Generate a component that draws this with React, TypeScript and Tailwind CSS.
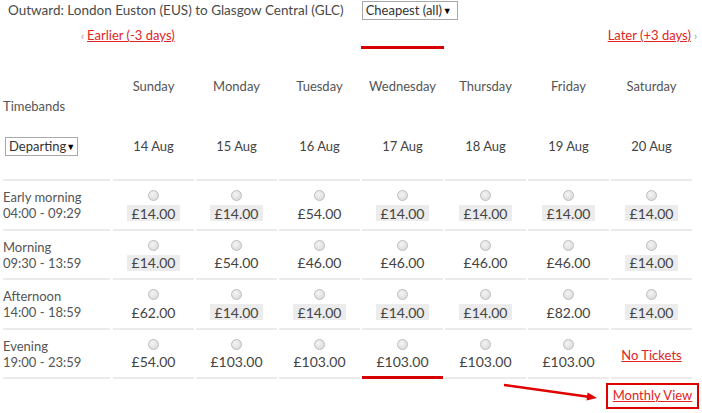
import React from "react";

type Cell = { price?: string; cheap?: boolean; none?: boolean };

const days = [
  { name: "Sunday", date: "14 Aug" },
  { name: "Monday", date: "15 Aug" },
  { name: "Tuesday", date: "16 Aug" },
  { name: "Wednesday", date: "17 Aug" },
  { name: "Thursday", date: "18 Aug" },
  { name: "Friday", date: "19 Aug" },
  { name: "Saturday", date: "20 Aug" },
];

const rows: { label: string; time: string; cells: Cell[] }[] = [
  {
    label: "Early morning",
    time: "04:00 - 09:29",
    cells: [
      { price: "£14.00", cheap: true },
      { price: "£14.00", cheap: true },
      { price: "£54.00" },
      { price: "£14.00", cheap: true },
      { price: "£14.00", cheap: true },
      { price: "£14.00", cheap: true },
      { price: "£14.00", cheap: true },
    ],
  },
  {
    label: "Morning",
    time: "09:30 - 13:59",
    cells: [
      { price: "£14.00", cheap: true },
      { price: "£54.00" },
      { price: "£46.00" },
      { price: "£46.00" },
      { price: "£46.00" },
      { price: "£46.00" },
      { price: "£14.00", cheap: true },
    ],
  },
  {
    label: "Afternoon",
    time: "14:00 - 18:59",
    cells: [
      { price: "£62.00" },
      { price: "£14.00", cheap: true },
      { price: "£14.00", cheap: true },
      { price: "£14.00", cheap: true },
      { price: "£14.00", cheap: true },
      { price: "£82.00" },
      { price: "£14.00", cheap: true },
    ],
  },
  {
    label: "Evening",
    time: "19:00 - 23:59",
    cells: [
      { price: "£54.00" },
      { price: "£103.00" },
      { price: "£103.00" },
      { price: "£103.00" },
      { price: "£103.00" },
      { price: "£103.00" },
      { none: true },
    ],
  },
];

const Radio = () => (
  <span className="block h-[11px] w-[11px] rounded-full border border-[#bdbdbd] bg-[radial-gradient(circle_at_40%_35%,#f4f4f4,#d6d6d6)]" />
);

const Select = ({ label, className }: { label: string; className: string }) => (
  <div
    className={`flex items-center justify-between border border-[#a9a9a9] bg-white pl-[3px] pr-[5px] text-[13px] leading-none text-[#333] ${className}`}
  >
    <span>{label}</span>
    <span className="text-[9px] text-black">▼</span>
  </div>
);

export default function App() {
  return (
    <div className="relative h-[413px] w-[702px] overflow-hidden bg-white font-['Lato',sans-serif] text-[13px] text-[#555]">
      {/* title row */}
      <div className="flex h-[20px] items-center pl-[8px] pt-[1px]">
        <span className="text-[13.5px] text-[#4a4a4a]">
          Outward: London Euston (EUS) to Glasgow Central (GLC)
        </span>
        <Select label="Cheapest (all)" className="ml-[18px] h-[19px] w-[96px]" />
      </div>

      {/* earlier / later */}
      <div className="flex h-[26px] items-center justify-between pl-[81px] pr-[5px] pt-[6px]">
        <span className="flex items-center gap-[3px]">
          <span className="text-[11px] text-[#999]">‹</span>
          <a className="text-[#e02424] underline">Earlier (-3 days)</a>
        </span>
        <span className="flex items-center gap-[3px]">
          <a className="text-[#e02424] underline">Later (+3 days)</a>
          <span className="text-[11px] text-[#999]">›</span>
        </span>
      </div>

      <div className="grid grid-cols-[112px_repeat(7,83px)]">
        {/* selected day marker */}
        <div className="col-start-5 h-[3px] bg-[#d60000]" />
        <div className="col-span-8 h-0" />

        {/* header */}
        <div className="ml-[3px] mr-[2px] h-[132px] border-b-2 border-[#ebebeb]">
          <div className="pt-[49px] leading-[16px]">Timebands</div>
          <Select label="Departing" className="ml-[2px] mt-[23px] h-[19px] w-[73px]" />
        </div>
        {days.map((d) => (
          <div
            key={d.name}
            className="mx-[1px] flex h-[132px] flex-col items-center border-b-2 border-[#ebebeb] pt-[29px] leading-[16px]"
          >
            <span>{d.name}</span>
            <span className="mt-[44px] text-[#444]">{d.date}</span>
          </div>
        ))}

        {/* body */}
        {rows.map((r, ri) => (
          <React.Fragment key={r.label}>
            <div className="ml-[3px] mr-[2px] h-[49.5px] border-b-2 border-[#ebebeb] pt-[8px] leading-[16px]">
              <div>{r.label}</div>
              <div>{r.time}</div>
            </div>
            {r.cells.map((c, ci) => {
              const redLine = ri === rows.length - 1 && ci === 3;
              return (
                <div
                  key={ci}
                  className={`mx-[1px] flex h-[49.5px] flex-col items-center ${
                    redLine ? "border-b-[3px] border-[#d60000]" : "border-b-2 border-[#ebebeb]"
                  }`}
                >
                  {c.none ? (
                    <a className="mt-[16px] text-[#e02424] underline">No Tickets</a>
                  ) : (
                    <>
                      <span className="mt-[9px]">
                        <Radio />
                      </span>
                      <span
                        className={`mt-[4px] flex h-[16px] items-center px-[5px] text-[14px] text-[#444] ${
                          c.cheap ? "bg-[#ececec]" : ""
                        }`}
                      >
                        {c.price}
                      </span>
                    </>
                  )}
                </div>
              );
            })}
          </React.Fragment>
        ))}
      </div>

      {/* monthly view */}
      <div className="mt-[4px] flex items-start justify-end pr-[3px]">
        <svg width="96" height="22" viewBox="0 0 96 22" className="mr-[8px]">
          <line x1="2" y1="2" x2="88" y2="14" stroke="#e00000" strokeWidth="2.5" />
          <polygon points="95,15 85.6,9.6 84.5,17.6" fill="#e00000" />
        </svg>
        <div className="flex h-[26px] w-[93px] items-center justify-center border-2 border-[#e00000]">
          <a className="text-[#e02424] underline">Monthly View</a>
        </div>
      </div>
    </div>
  );
}
